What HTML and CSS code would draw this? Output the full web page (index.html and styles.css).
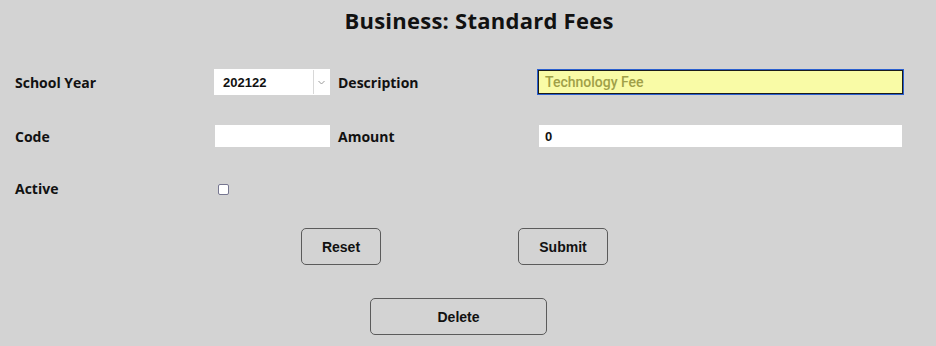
FILE: index.html
```html
<!DOCTYPE html>
<html>
<head>
<meta charset="utf-8">
<link rel="stylesheet" href="styles.css">
</head>
<body>
<h1 class="title">Business: Standard Fees</h1>
<div class="form">
  <label class="lbl">School Year</label>
  <div class="select"><span class="sel-val">202122</span><span class="sel-arrow"><svg width="7" height="5" viewBox="0 0 7 5"><path d="M0.5 1 L3.5 4 L6.5 1" fill="none" stroke="#9a9a9a" stroke-width="1"/></svg></span></div>
  <label class="lbl lbl2">Description</label>
  <div class="input desc">Technology Fee</div>

  <label class="lbl">Code</label>
  <div class="input code"></div>
  <label class="lbl lbl2">Amount</label>
  <div class="input amount">0</div>

  <label class="lbl">Active</label>
  <div class="chk-cell"><span class="chk"></span></div>
</div>
<div class="btn-row">
  <button class="btn reset">Reset</button>
  <button class="btn submit">Submit</button>
</div>
<div class="btn-row2">
  <button class="btn delete">Delete</button>
</div>
</body>
</html>
```
FILE: styles.css
```css
html, body { margin: 0; padding: 0; }
body {
  background: #d3d3d3;
  width: 936px;
  height: 346px;
  overflow: hidden;
  font-family: "Open Sans", "Noto Sans", sans-serif;
  color: #111;
}
.title {
  margin: 0;
  padding-top: 5px;
  padding-left: 22px;
  text-align: center;
  font-size: 22px;
  letter-spacing: 0.25px;
  font-weight: 700;
  line-height: 30px;
  color: #111;
}
.form {
  margin-top: 34px;
  padding-left: 15px;
  display: grid;
  grid-template-columns: 199px 116px 208px 365px;
  grid-template-rows: 26px 30px 22px 30px 22px;
}
.lbl {
  font-size: 14px;
  font-weight: 700;
  display: flex;
  align-items: center;
}
.lbl2 { padding-left: 8px; }
.form > :nth-child(n+5):nth-child(-n+8) { grid-row: 3; }
.form > :nth-child(n+9) { grid-row: 5; }
.select {
  background: #fff;
  height: 26px;
  display: flex;
  align-items: center;
  box-sizing: border-box;
  border: 1px solid #fff;
}
.sel-val {
  flex: 1;
  padding-left: 8px;
  font-family: "Liberation Sans", Arial, sans-serif;
  font-weight: 700;
  font-size: 13px;
}
.sel-arrow {
  width: 15px;
  height: 24px;
  border-left: 1px solid #d8d8d8;
  display: flex;
  align-items: center;
  justify-content: center;
}
.input {
  background: #fff;
  height: 22px;
  box-sizing: border-box;
  padding-left: 6px;
  display: flex;
  align-items: center;
  font-family: "Liberation Sans", Arial, sans-serif;
  font-weight: 700;
  font-size: 13px;
}
.desc {
  height: 24px;
  margin-top: 1px;
  background: #f9fba6;
  border: 1px solid #1b1b1b;
  outline: 1px solid #2a5fd0;
  color: #a0a048;
  font-family: Roboto, "Liberation Sans", sans-serif;
  font-weight: 500;
  font-size: 14px;
}
.amount { margin-left: 1px; width: 363px; }
.code { margin-left: 1px; width: 115px; }
.chk-cell { display: flex; align-items: center; padding-left: 4px; }
.chk {
  width: 9px;
  height: 9px;
  background: #fff;
  border: 1px solid #767690;
  border-radius: 2px;
  display: block;
}
.form > .chk-cell { margin-top: 2px; }
.btn {
  font-family: "Liberation Sans", Arial, sans-serif;
  font-weight: 700;
  font-size: 14px;
  color: #111;
  background: transparent;
  border: 1px solid #5b5b5b;
  border-radius: 5px;
  height: 37px;
  padding: 0;
  margin: 0;
}
.btn-row {
  margin-top: 29px;
  padding-left: 301px;
  display: flex;
  gap: 137px;
}
.reset { width: 80px; }
.submit { width: 90px; }
.btn-row2 {
  margin-top: 33px;
  padding-left: 370px;
  display: flex;
}
.delete { width: 177px; }
```
